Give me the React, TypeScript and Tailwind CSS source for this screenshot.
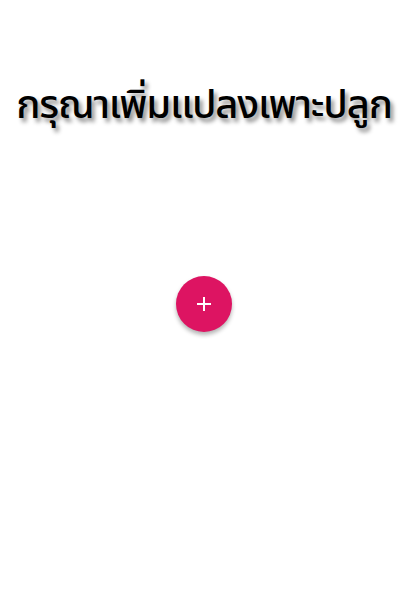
export default function App() {
  return (
    <div className="w-[400px] h-[595px] bg-white flex flex-col items-center pl-2">
      <h1 className="mt-[76px] text-[40px] leading-[60px] font-medium tracking-[-1.2px] text-black font-['Noto_Sans_Thai','Noto_Sans',sans-serif] [text-shadow:3px_4px_4px_rgba(0,0,0,0.45)] whitespace-nowrap">
        กรุณาเพิ่มแปลงเพาะปลูก
      </h1>
      <button className="mt-[140px] w-14 h-14 rounded-full bg-[#dd1462] text-white flex items-center justify-center shadow-[0_3px_4px_rgba(0,0,0,0.3)]">
        <svg width="16" height="16" viewBox="0 0 16 16" fill="none" stroke="white" strokeWidth="2">
          <path d="M8 1v14M1 8h14" />
        </svg>
      </button>
    </div>
  );
}
